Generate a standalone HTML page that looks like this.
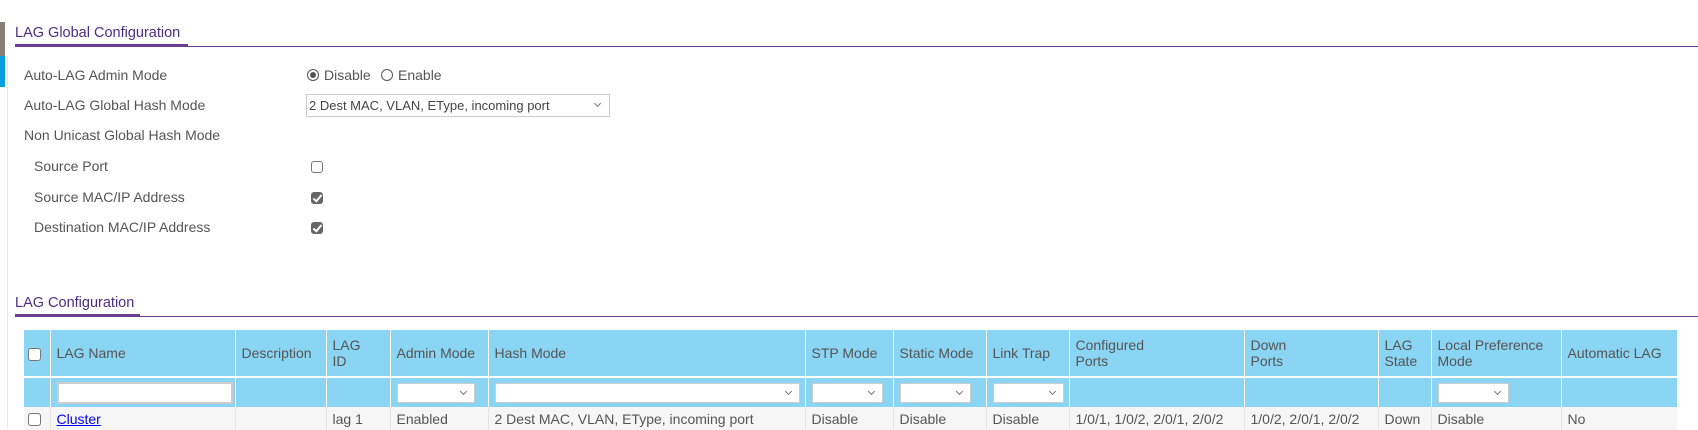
<!DOCTYPE html>
<html><head><style>
body{margin:0;width:1698px;height:429px;overflow:hidden;background:#fff;font-family:"Liberation Sans",sans-serif;font-size:14px;color:#555;position:relative}
.a{position:absolute;white-space:nowrap}
.title{color:#4b2e83;font-size:14.5px}
.chk{position:absolute;width:12px;height:12px;border:1px solid #777;border-radius:3px;background:#fff;box-sizing:border-box}
.chk.on{background:#666;border-color:#666}
.chk.on:after{content:"";position:absolute;left:3px;top:0px;width:3px;height:7px;border:solid #fff;border-width:0 2px 2px 0;transform:rotate(40deg)}
table{position:absolute;left:24px;top:330px;border-collapse:collapse;table-layout:fixed;width:1653px}
td{border-left:1px solid #fff;padding:0 0 0 6px;vertical-align:middle;white-space:nowrap;overflow:hidden}
tr.h td{background:#8ad4f4;height:46px;line-height:16px;border-bottom:2px solid #fff}
tr.f td{background:#8ad4f4;height:29px}
tr.d td{background:#f6f6f6;height:23px;border-left:1px solid #e4e4e4}
.sel{display:block;height:20px;border:1px solid #ccc;background:#fff;box-sizing:border-box;position:relative}
.sel:after{content:"";position:absolute;right:8px;top:5px;width:4px;height:4px;border:solid #777;border-width:0 1.5px 1.5px 0;transform:rotate(45deg)}
.inp{display:block;border:2px solid #ccc;background:#fff;box-sizing:border-box}
.cb{display:inline-block;width:13px;height:13px;border:1px solid #777;border-radius:3px;background:#fff;box-sizing:border-box;vertical-align:middle}
a{color:#00e;text-decoration:underline}
</style></head><body>
<div class="a" style="left:0;top:22px;width:5px;height:34px;background:#8a7f76"></div>
<div class="a" style="left:0;top:56px;width:5px;height:31px;background:#0aa0e0"></div>
<div class="a" style="left:7px;top:56px;width:1px;height:373px;background:#e6e6e6"></div>

<div class="a title" style="left:15px;top:25px">LAG Global Configuration</div>
<div class="a" style="left:15px;top:46px;width:1683px;height:1px;background:#6b3f8f"></div>
<div class="a" style="left:15px;top:44px;width:173px;height:3px;background:#6b3f8f"></div>

<div class="a" style="left:24px;top:67px">Auto-LAG Admin Mode</div>
<div class="a" style="left:24px;top:97px">Auto-LAG Global Hash Mode</div>
<div class="a" style="left:24px;top:127px">Non Unicast Global Hash Mode</div>
<div class="a" style="left:34px;top:158px">Source Port</div>
<div class="a" style="left:34px;top:189px">Source MAC/IP Address</div>
<div class="a" style="left:34px;top:219px">Destination MAC/IP Address</div>

<div class="a" style="left:307px;top:69px;width:12px;height:12px;border:1px solid #555;border-radius:50%;box-sizing:border-box"><div style="position:absolute;left:2px;top:2px;width:6px;height:6px;border-radius:50%;background:#555"></div></div>
<div class="a" style="left:324px;top:67px">Disable</div>
<div class="a" style="left:381px;top:69px;width:12px;height:12px;border:1px solid #555;border-radius:50%;box-sizing:border-box"></div>
<div class="a" style="left:398px;top:67px">Enable</div>

<div class="a" style="left:306px;top:94px;width:304px;height:23px;border:1px solid #ccc;box-sizing:border-box;font-size:13px;line-height:21px;padding-left:2px;color:#444">2 Dest MAC, VLAN, EType, incoming port<span style="position:absolute;right:9px;top:6px;width:4px;height:4px;border:solid #777;border-width:0 1.5px 1.5px 0;transform:rotate(45deg)"></span></div>

<div class="chk" style="left:311px;top:161px"></div>
<div class="chk on" style="left:311px;top:192px"></div>
<div class="chk on" style="left:311px;top:222px"></div>

<div class="a title" style="left:15px;top:295px">LAG Configuration</div>
<div class="a" style="left:15px;top:316px;width:1683px;height:1px;background:#6b3f8f"></div>
<div class="a" style="left:15px;top:314px;width:125px;height:3px;background:#6b3f8f"></div>

<table>
<colgroup><col style="width:26px"><col style="width:185px"><col style="width:91px"><col style="width:64px"><col style="width:98px"><col style="width:317px"><col style="width:88px"><col style="width:93px"><col style="width:83px"><col style="width:175px"><col style="width:134px"><col style="width:53px"><col style="width:130px"><col style="width:116px"></colgroup>
<tr class="h"><td style="border-left:none;padding-left:4px"><span class="cb"></span></td><td>LAG Name</td><td>Description</td><td>LAG<br>ID</td><td>Admin Mode</td><td>Hash Mode</td><td>STP Mode</td><td>Static Mode</td><td>Link Trap</td><td>Configured<br>Ports</td><td>Down<br>Ports</td><td>LAG<br>State</td><td>Local Preference<br>Mode</td><td>Automatic LAG</td></tr>
<tr class="f"><td style="border-left:none"></td><td style="padding-right:6px"><span class="inp" style="width:176px;height:22px"></span></td><td></td><td></td><td><span class="sel" style="width:78px"></span></td><td><span class="sel" style="width:305px"></span></td><td><span class="sel" style="width:71px"></span></td><td><span class="sel" style="width:71px"></span></td><td><span class="sel" style="width:71px"></span></td><td></td><td></td><td></td><td><span class="sel" style="width:71px"></span></td><td></td></tr>
<tr class="d"><td style="border-left:none;padding-left:4px"><span class="cb"></span></td><td><a>Cluster</a></td><td></td><td>lag 1</td><td>Enabled</td><td>2 Dest MAC, VLAN, EType, incoming port</td><td>Disable</td><td>Disable</td><td>Disable</td><td>1/0/1, 1/0/2, 2/0/1, 2/0/2</td><td>1/0/2, 2/0/1, 2/0/2</td><td>Down</td><td>Disable</td><td>No</td></tr>
</table>
</body></html>
